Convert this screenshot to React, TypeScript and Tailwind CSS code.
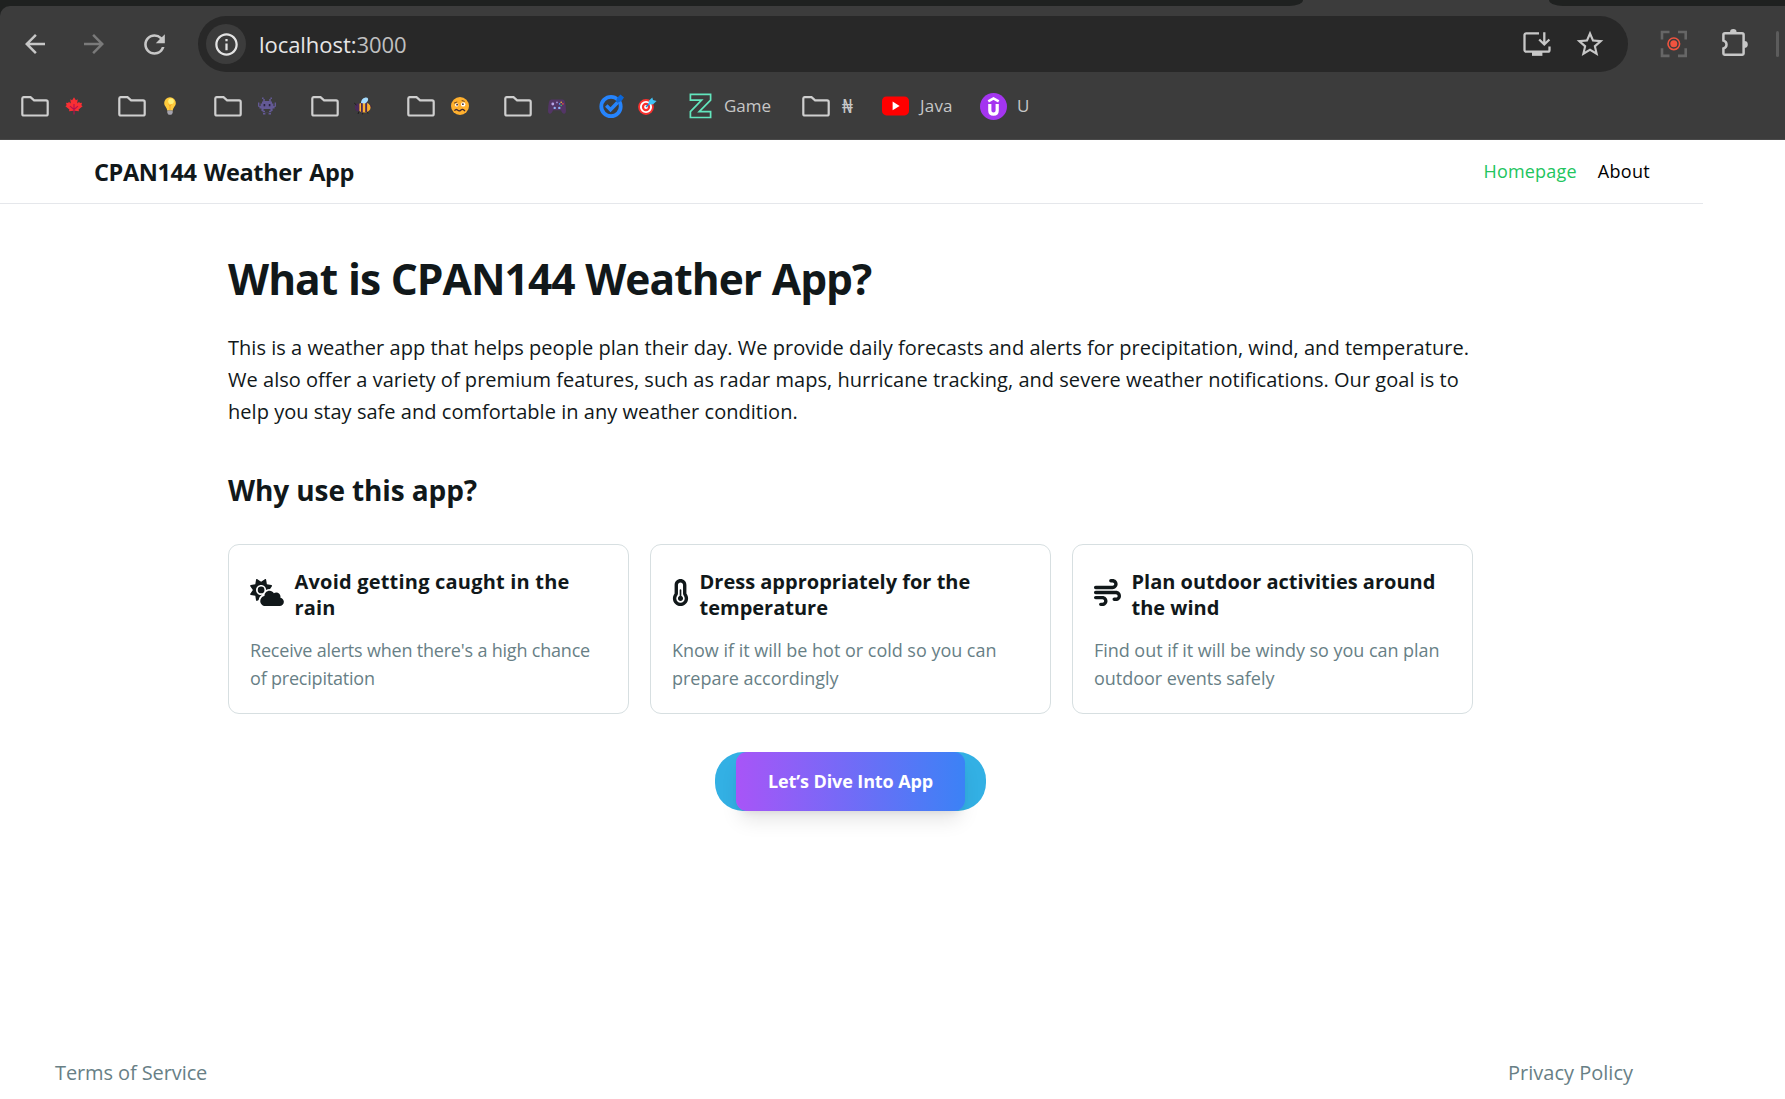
import type { ReactNode } from "react";
import { FaCloudSun, FaTemperatureHalf, FaWind } from "react-icons/fa6";
import { MdArrowBack, MdArrowForward, MdInfoOutline, MdRefresh, MdStarOutline } from "react-icons/md";

function InstallIcon() {
  return (
    <svg width="28" height="26" viewBox="0 0 28 26" fill="none" stroke="#c7c7c7" strokeWidth="2.3">
      <path d="M16 2.3H3.2A1.7 1.7 0 0 0 1.5 4v15a1.7 1.7 0 0 0 1.7 1.7h21.6a1.7 1.7 0 0 0 1.7-1.7v-3.6" />
      <path d="M21.3 1.2v12M16.2 8.5l5.1 5 5.1-5" />
      <path d="M9 22.6h10.4" strokeWidth="4.5" />
    </svg>
  );
}

function RecorderIcon() {
  return (
    <svg width="28" height="28" viewBox="0 0 28 28" fill="none">
      <path
        d="M2 9.5V2h7.5M18 2h7.7v7.5M2 18.3v7.6h7.5M18 25.9h7.7v-7.6"
        stroke="#666"
        strokeWidth="2.6"
      />
      <circle cx="13.8" cy="13.8" r="5.8" stroke="#f0533f" strokeWidth="1.6" />
      <circle cx="13.8" cy="13.8" r="3.5" fill="#f0533f" />
    </svg>
  );
}

function PuzzleIcon() {
  return (
    <svg width="30" height="30" viewBox="0 0 30 30" fill="none">
      <path
        d="M5 6.2h17a1.6 1.6 0 0 1 1.6 1.6v18.8a1.2 1.2 0 0 1-1.2 1.2H4.6a1.2 1.2 0 0 1-1.2-1.2v-5.2a4 4 0 0 0 0-7.8V7.8A1.6 1.6 0 0 1 5 6.2Z"
        stroke="#c7c7c7"
        strokeWidth="2.5"
      />
      <path d="M10 6.2V5.4a3.3 3.3 0 0 1 6.6 0v.8ZM23.6 14h.8a3.4 3.4 0 0 1 0 6.8h-.8Z" fill="#c7c7c7" />
    </svg>
  );
}

function FolderIcon() {
  return (
    <svg width="28" height="21" viewBox="0 0 28 21" fill="none">
      <path
        d="M2.6 1.2h6.9l3.6 3.2h12a1.6 1.6 0 0 1 1.6 1.6v11.9a1.6 1.6 0 0 1-1.6 1.6H2.9a1.6 1.6 0 0 1-1.6-1.6V2.6a1.4 1.4 0 0 1 1.3-1.4Z"
        stroke="#cfcfcf"
        strokeWidth="2.2"
      />
    </svg>
  );
}

function MapleIcon() {
  return (
    <svg width="18" height="18" viewBox="0 0 18 18">
      <path
        d="M9 .2 10.9 3.3 12.7 2.3 12.2 6.6 14.2 4.7 14.8 6.1 17 5.7 16.4 8.2 17.6 9.2 13.6 12.6 14 14.3 9.6 13.7H8.4L4 14.3 4.4 12.6.4 9.2 1.6 8.2 1 5.7 3.2 6.1 3.8 4.7 5.8 6.6 5.3 2.3 7.1 3.3Z"
        fill="#f92f34"
      />
      <path d="M9 7v10.6M9 12.5 5 9.2M9 12.5l4-3.3" stroke="#b4114f" strokeWidth="1.1" fill="none" />
    </svg>
  );
}

function BulbIcon() {
  return (
    <svg width="12" height="18" viewBox="0 0 12 18">
      <path d="M6 .2a5.8 5.8 0 0 1 5.8 5.9c0 3.4-2.9 4.4-2.9 7.4H3.1c0-3-2.9-4-2.9-7.4A5.8 5.8 0 0 1 6 .2Z" fill="#ffcb3d" />
      <circle cx="7" cy="4.2" r="2.8" fill="#fff27a" />
      <path d="M4.6 7.5 6 9l1.4-1.5M6 9v4" stroke="#f59a23" strokeWidth=".8" fill="none" />
      <path d="M3.3 13.5h5.4v2.6L7.4 17.8H4.6l-1.3-1.7Z" fill="#a5a3ad" />
    </svg>
  );
}

function AlienIcon() {
  return (
    <svg width="18" height="18" viewBox="0 0 18 18" fill="#635994">
      <path d="M4 .5h1.6v1.6h1.2v1.9h4.4V2.1h1.2V.5H14v1.6h-1.2V4.6H14v2h1.4V9h1.2V5.6H18v4.2h-1.4v1.6h-2V14h-1.2v1.2H4.6V14H3.4v-2.6h-2V9.800H0V5.6h1.4V9h1.2V6.6H4v-2h1.2V2.1H4Z" />
      <path d="M5 16h2.4v1.6H5ZM10.6 16H13v1.6h-2.400Z" />
      <path d="M5.600 7h1.600v2.200H5.600ZM10.800 7h1.600v2.200h-1.600Z" fill="#28233d" />
      <path d="M5.600 12h6.800v1.800H11v1.500H7v-1.500H5.600Z" fill="#3c3c3c" />
    </svg>
  );
}

function BeeIcon() {
  return (
    <svg width="18" height="18" viewBox="0 0 18 18">
      <path d="M5 14.5 4 17M9 15l-.5 2.3M12.5 14.5l1.5 2" stroke="#1c1c1c" strokeWidth="1" />
      <path d="m15.5 7 2.3 2.7-2.3 2.5Z" fill="#3a2140" />
      <ellipse cx="10" cy="10.4" rx="6.6" ry="5.2" fill="#fcb02f" />
      <path d="M1 9a3.3 3.3 0 0 1 4.4-2v7.2A3.7 3.7 0 0 1 1 11.500Z" fill="#4a2a5a" />
      <path d="M7 5.8h1.8v9.6H7ZM11.2 5.4h1.9v9.6h-1.9Z" fill="#4a2a5a" />
      <path d="M7 6C7 2.5 9.5.4 12.2.4c1.8 0 2.4 1.6 1.6 3.4-.7 1.5-2 2.5-3.2 2.7Z" fill="#a6dcff" />
      <path d="M.3 6.2 2.5 8" stroke="#1c1c1c" strokeWidth="1" />
    </svg>
  );
}

function WoozyIcon() {
  return (
    <svg width="18" height="18" viewBox="0 0 18 18" fill="none">
      <circle cx="9" cy="9" r="9" fill="#ffb02e" />
      <circle cx="5.7" cy="7.9" r="1.7" fill="#fff" />
      <circle cx="12.2" cy="7.4" r="2.2" fill="#fff" />
      <circle cx="6.1" cy="7.7" r=".9" fill="#402a32" />
      <circle cx="11.9" cy="7.2" r=".9" fill="#402a32" />
      <path d="m3 6.2 3.2-1.3M10.7 3.500l3 .9" stroke="#6b4526" strokeWidth="1" />
      <path d="M3.5 13.8c.8-1.5 2-1.6 3-.7s2 1.3 3.2.1 2.5-1.4 4.3.9" stroke="#402a32" strokeWidth="1.3" />
    </svg>
  );
}

function GamepadIcon() {
  return (
    <svg width="18" height="15" viewBox="0 0 18 15">
      <path d="M3.5.6h11c1.4 0 2.2 1.2 2.6 3 .5 2.5.9 5.4.9 8.2 0 2-.8 2.9-1.9 2.9-1.5 0-2.3-1.2-3.1-3.400H5C4.200 13.500 3.400 14.700 1.900 14.700.8 14.700 0 13.800 0 11.800c0-2.800.4-5.700.9-8.200.4-1.800 1.200-3 2.600-3Z" fill="#533566" />
      <circle cx="4.8" cy="5" r="1.4" fill="#b7a6e8" />
      <circle cx="6.7" cy="8.9" r="1.2" fill="#8fb0f5" />
      <circle cx="11.3" cy="8.9" r="1.2" fill="#8fb0f5" />
      <circle cx="9" cy="3.4" r=".9" fill="#a594d6" />
      <circle cx="13.2" cy="3.3" r=".8" fill="#f4c430" />
      <circle cx="14.9" cy="4.9" r=".8" fill="#f0533f" />
      <circle cx="13.2" cy="6.5" r=".8" fill="#3fbf6a" />
      <circle cx="11.6" cy="4.9" r=".8" fill="#4d9cf5" />
    </svg>
  );
}

function TargetIcon() {
  return (
    <svg width="19" height="18" viewBox="0 0 19 18" fill="none">
      <circle cx="8" cy="10" r="7.9" fill="#f8312f" />
      <circle cx="8" cy="10" r="5.1" stroke="#fff" strokeWidth="1.9" />
      <circle cx="8" cy="10" r="1.9" fill="#fff" />
      <path d="m8 10 5.5-5.5" stroke="#1b7fd0" strokeWidth="1.4" />
      <path d="m10.5 7.6.4-3.9L14.3.4l.7 2.7 3.6.8-3.4 3.4Z" fill="#3fc3f7" />
    </svg>
  );
}

function CheckBadgeIcon() {
  return (
    <svg width="26" height="26" viewBox="0 0 26 26" fill="none">
      <circle cx="12" cy="13.5" r="9.7" stroke="#2684fc" strokeWidth="3.8" />
      <path d="m7.3 12.5 4.2 4.2 7-7.3" stroke="#2684fc" strokeWidth="3.6" />
      <path d="m17 8.5 1.2-3.7 3.3-3.2 3.5 3-2.3 3.2-3.3 1.8Z" fill="#0b66d8" />
    </svg>
  );
}

function ZoneIcon() {
  return (
    <svg width="23" height="26" viewBox="0 0 23 26" fill="none">
      <path
        d="M1.4 1.3h20.2v5.900L10.200 18.600h11.400v5.900H1.400v-5.900L12.600 7.200H1.400Z"
        stroke="#62e6bd"
        strokeWidth="1.7"
      />
    </svg>
  );
}

function YoutubeIcon() {
  return (
    <svg width="27" height="20" viewBox="0 0 27 20">
      <rect y=".4" width="27" height="19" rx="4.5" fill="#f00" />
      <path d="M10.6 5.6v8.6l7-4.3Z" fill="#fff" />
    </svg>
  );
}

function UdemyIcon() {
  return (
    <svg width="27" height="27" viewBox="0 0 27 27" fill="none">
      <circle cx="13.5" cy="13.5" r="13.5" fill="#a435f0" />
      <path d="m8.300 8.400 5.200-3 5.200 3" stroke="#fff" strokeWidth="2.5" />
      <path d="M9.800 11v6.400c0 2.300 1.500 3.700 3.700 3.700s3.700-1.400 3.700-3.700V11" stroke="#fff" strokeWidth="3.2" />
    </svg>
  );
}

function Bookmark({ icon, children, className }: { icon: ReactNode; children: ReactNode; className: string }) {
  return (
    <div className={`flex shrink-0 items-center ${className}`}>
      {icon}
      {children}
    </div>
  );
}

function BrowserChrome() {
  return (
    <div className="flex h-[140px] flex-col border-b border-[#4a4a4a] bg-[#3c3c3c]">
      <div className="flex h-[6px] shrink-0 justify-between">
        <div className="w-[1303px] rounded-br-[14px_6px] bg-[#1f2120]" />
        <div className="w-[236px] rounded-bl-[14px_6px] bg-[#1f2120]" />
      </div>
      <div className="bg-[#1f2120]">
        <div className="flex h-[66px] items-center rounded-tl-[10px] bg-[#3c3c3c] pt-2.5">
          <MdArrowBack className="ml-5 size-[30px] text-[#c7c7c7]" />
          <MdArrowForward className="ml-[29px] size-[30px] text-[#7a7a7a]" />
          <MdRefresh className="ml-[30px] size-[31px] text-[#c7c7c7]" />
          <div className="ml-7 flex h-14 w-[1430px] items-center rounded-full bg-[#282828] pl-2">
            <div className="flex size-10 items-center justify-center rounded-full bg-[#3c3c3c]">
              <MdInfoOutline className="size-[27px] text-[#e3e3e3]" />
            </div>
            <div className="ml-[13px] text-[22px] leading-8 tracking-[-0.05px] text-[#e6e6e6]">
              localhost:<span className="text-[#c0c0c0]">3000</span>
            </div>
            <div className="mr-[22px] ml-auto flex items-center gap-[23px]">
              <InstallIcon />
              <MdStarOutline className="size-[32px] text-[#c7c7c7]" />
            </div>
          </div>
          <div className="ml-[32px]">
            <RecorderIcon />
          </div>
          <div className="mb-1 ml-[32px]">
            <PuzzleIcon />
          </div>
          <div className="ml-[26px] h-[26px] w-[3px] rounded-sm bg-[#5c5c5c]" />
        </div>
      </div>
      <div className="mt-4 flex h-[36px] shrink-0 items-center pl-[21px] text-[17px] leading-6 text-[#c7c7c7]">
        <Bookmark icon={<FolderIcon />} className="w-[97px] gap-4">
          <MapleIcon />
        </Bookmark>
        <Bookmark icon={<FolderIcon />} className="w-[96px] gap-[18px]">
          <BulbIcon />
        </Bookmark>
        <Bookmark icon={<FolderIcon />} className="w-[97px] gap-4">
          <AlienIcon />
        </Bookmark>
        <Bookmark icon={<FolderIcon />} className="w-[96px] gap-[15px]">
          <BeeIcon />
        </Bookmark>
        <Bookmark icon={<FolderIcon />} className="w-[97px] gap-4">
          <WoozyIcon />
        </Bookmark>
        <Bookmark icon={<FolderIcon />} className="w-[95px] gap-4">
          <GamepadIcon />
        </Bookmark>
        <Bookmark icon={<CheckBadgeIcon />} className="w-[90px] gap-[13px]">
          <TargetIcon />
        </Bookmark>
        <Bookmark icon={<ZoneIcon />} className="w-[113px] gap-[12px]">
          <span>Game</span>
        </Bookmark>
        <Bookmark icon={<FolderIcon />} className="w-[80px] gap-[12px]">
          <span className="text-[19px]">₦</span>
        </Bookmark>
        <Bookmark icon={<YoutubeIcon />} className="w-[98px] gap-[11px]">
          <span className="tracking-[0.2px]">Java</span>
        </Bookmark>
        <Bookmark icon={<UdemyIcon />} className="gap-[10px]">
          <span>U</span>
        </Bookmark>
      </div>
    </div>
  );
}

type FeatureCardProps = {
  icon: ReactNode;
  title: string;
  text: string;
  titleClass: string;
  textClass: string;
};

function FeatureCard({ icon, title, text, titleClass, textClass }: FeatureCardProps) {
  return (
    <div className="h-[170px] rounded-[11px] border border-[#d7dfe1] px-[21px] pt-6">
      <div className="flex items-center gap-[10.5px]">
        <div className="mb-1.5 shrink-0">{icon}</div>
        <h3 className={`text-[20px] leading-[26px] font-bold ${titleClass}`}>{title}</h3>
      </div>
      <p className={`mt-[15px] text-[18px] leading-7 text-[#687f86] ${textClass}`}>{text}</p>
    </div>
  );
}

export default function App() {
  return (
    <div className="flex h-[1099px] flex-col overflow-hidden bg-white font-['Open_Sans','Noto_Sans',sans-serif] text-[#11181a]">
      <BrowserChrome />
      <div className="flex w-[1703px] grow flex-col pr-0.5">
        <header className="-mr-0.5 flex h-16 items-center justify-between border-b border-[#e5e7eb] pr-[53px] pl-[94px]">
          <div className="text-[23.5px] leading-8 font-bold tracking-[-0.4px] [word-spacing:1.5px]">CPAN144 Weather App</div>
          <nav className="flex gap-[21px] text-[18px] font-medium">
            <a className="tracking-[0.2px] text-[#22c55e]">Homepage</a>
            <a className="tracking-[0.3px] text-black">About</a>
          </nav>
        </header>
        <main className="mx-auto flex w-[1245px] flex-col pt-[51px]">
          <h1 className="text-[42.5px] leading-[48px] font-bold tracking-[-0.95px] [word-spacing:0.5px]">
            What is CPAN144 Weather App?
          </h1>
          <p className="mt-[29px] text-[20px] leading-8 tracking-[0.03px]">
            This is a weather app that helps people plan their day. We provide daily forecasts and alerts for
            precipitation, wind, and temperature. We also offer a variety of premium features, such as radar maps,
            hurricane tracking, and severe weather notifications. Our goal is to help you stay safe and comfortable in
            any weather condition.
          </p>
          <h2 className="mt-[44px] text-[28px] leading-9 font-bold tracking-[-0.1px]">Why use this app?</h2>
          <div className="mt-9 grid grid-cols-3 gap-[21px]">
            <FeatureCard
              icon={<FaCloudSun className="h-[27px] w-[34px]" />}
              title="Avoid getting caught in the rain"
              text="Receive alerts when there's a high chance of precipitation"
              titleClass="tracking-[0.2px]"
              textClass="tracking-[-0.2px]"
            />
            <FeatureCard
              icon={<FaTemperatureHalf className="h-[27px] w-[17px]" />}
              title="Dress appropriately for the temperature"
              text="Know if it will be hot or cold so you can prepare accordingly"
              titleClass="tracking-normal"
              textClass="tracking-[-0.02px]"
            />
            <FeatureCard
              icon={<FaWind className="size-[27px]" />}
              title="Plan outdoor activities around the wind"
              text="Find out if it will be windy so you can plan outdoor events safely"
              titleClass="tracking-normal"
              textClass="tracking-[-0.04px]"
            />
          </div>
          <div className="mt-[38px] flex h-[59px] w-[271px] self-center rounded-[28px] bg-[#33b0e4] px-[21px]">
            <button className="grow rounded-[11px] bg-linear-to-r/srgb from-[#a855f7] to-[#3b82f6] text-[18px] font-bold tracking-[-0.1px] text-white shadow-[0_13px_20px_-4px_rgba(0,0,0,0.1),0_5px_8px_-5px_rgba(0,0,0,0.1)]">
              Let’s Dive Into App
            </button>
          </div>
        </main>
        <footer className="mt-auto mb-[10px] flex justify-between pr-[68px] pl-[55px] text-[20px] leading-8 text-[#687f86]">
          <a className="tracking-[-0.1px]">Terms of Service</a>
          <a>Privacy Policy</a>
        </footer>
      </div>
    </div>
  );
}
